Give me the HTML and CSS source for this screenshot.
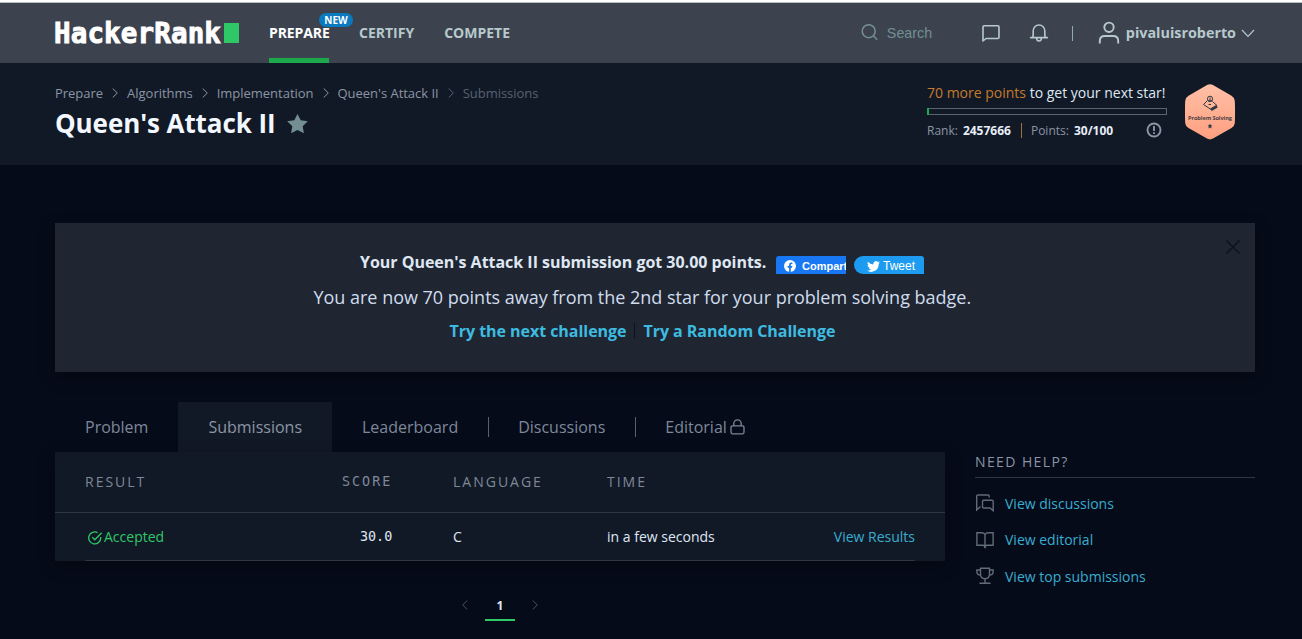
FILE: index.html
```html
<!DOCTYPE html>
<html lang="en">
<head>
<meta charset="utf-8">
<title>Queen's Attack II | HackerRank</title>
<link rel="stylesheet" href="styles.css">
</head>
<body>
<header class="topbar">
  <div class="logo"><span class="logo-text">HackerRank</span><span class="logo-block"></span></div>
  <nav class="nav">
    <a class="nav-item active">PREPARE<span class="new-badge">NEW</span></a>
    <a class="nav-item">CERTIFY</a>
    <a class="nav-item">COMPETE</a>
  </nav>
  <div class="tools">
    <div class="search">
      <svg width="18" height="18" viewBox="0 0 18 18" fill="none" stroke="currentColor" stroke-width="1.5"><circle cx="7.7" cy="7.2" r="6.5"/><path d="M12.300 11.800L16.200 15.700"/></svg>
      <span>Search</span>
    </div>
    <svg class="chat" width="20" height="20" viewBox="0 0 20 20" fill="none" stroke="currentColor" stroke-width="1.6" stroke-linejoin="round"><path d="M2 18V4Q2 2.800 3.200 2.800H16.800Q18 2.800 18 4V14.300Q18 15.500 16.800 15.500H5Z"/></svg>
    <svg class="bell" width="20" height="20" viewBox="0 0 20 20" fill="none" stroke="currentColor" stroke-width="1.600" stroke-linecap="round" stroke-linejoin="round"><path d="M1.600 14.600H18.400M3.600 14.600Q4.200 13 4.200 11V7.800A5.800 5.800 0 0 1 15.800 7.800V11Q15.800 13 16.400 14.600M7.600 15.200Q7.800 18 10 18T12.400 15.200"/></svg>
    <span class="divider"></span>
    <div class="user">
      <svg width="22" height="24" viewBox="0 0 22 24" fill="none" stroke="currentColor" stroke-width="1.9"><circle cx="11" cy="6.300" r="4.700"/><path d="M1.800 22.600V20Q1.800 15 6.800 15H15.200Q20.200 15 20.200 20V22.600"/></svg>
      <span class="username">pivaluisroberto</span>
      <svg class="caret" width="14" height="9" viewBox="0 0 14 9" fill="none" stroke="currentColor" stroke-width="1.1"><path d="M1 1L7 7.400L13 1"/></svg>
    </div>
  </div>
</header>

<section class="pagehead">
  <div class="headings">
    <div class="crumbs">
      <a>Prepare</a><svg class="chev" viewBox="0 0 6 10"><path d="M.7.5L5.3 5L.7 9.5"/></svg>
      <a>Algorithms</a><svg class="chev" viewBox="0 0 6 10"><path d="M.7.5L5.3 5L.7 9.5"/></svg>
      <a>Implementation</a><svg class="chev" viewBox="0 0 6 10"><path d="M.7.5L5.3 5L.7 9.5"/></svg>
      <a>Queen's Attack II</a><svg class="chev dim" viewBox="0 0 6 10"><path d="M.7.5L5.3 5L.7 9.5"/></svg>
      <span class="dim">Submissions</span>
    </div>
    <div class="title-row">
      <h1>Queen's Attack II</h1>
      <svg class="star" width="21" height="20" viewBox="0 0 21 20"><path fill="currentColor" d="M10.5 0L13.7 6.3L20.8 7.3L15.7 12.3L16.9 19.3L10.5 16L4.1 19.3L5.3 12.3L.2 7.3L7.3 6.3Z"/></svg>
    </div>
  </div>
  <div class="progress">
    <div class="goal"><em>70 more points</em> to get your next star!</div>
    <div class="bar"><div class="bar-fill"></div></div>
    <div class="stats">
      <span>Rank:</span><b>2457666</b><i class="sep"></i><span>Points:</span><b>30/100</b>
      <svg class="info" width="16" height="16" viewBox="0 0 16 16" fill="none" stroke="currentColor"><circle cx="8" cy="8" r="6.5" stroke-width="1.900"/><path stroke-width="1.900" d="M8 4V9M8 10.200V12"/></svg>
    </div>
  </div>
  <svg class="hex" width="50" height="56" viewBox="0 0 50 56">
    <defs><linearGradient id="peach" x1="0" y1="0" x2="0" y2="1"><stop offset="0" stop-color="#ffc0a6"/><stop offset="1" stop-color="#ff9f80"/></linearGradient></defs>
    <path fill="url(#peach)" d="M22.5.8Q25-.4 27.5.8L46.5 11.8Q49.5 13.5 49.8 17Q50.3 28 49.8 39Q49.5 42.3 46.5 44L28 54.6Q25 56.2 22 54.6L3.5 44Q.5 42.3.2 39Q-.3 28 .2 17Q.5 13.5 3.5 11.8Z"/>
    <g fill="none" stroke="#2f3945"><path d="M22.500 16.500L18.500 20.500L26 25.500L32 21.500L28 18"/><path stroke-width="2.800" d="M26 25.800L32 22.300"/><circle cx="25" cy="14.800" r="2.600"/><path d="M25 13.500V18M23 17H28M23.500 20.500H26"/></g>
    <text class="hex-label" x="25" y="36.200" text-anchor="middle" textLength="44">Problem Solving</text>
    <path fill="#2f3945" d="M25 39.600L25.800 41.200L27.500 41.400L26.200 42.600L26.600 44.400L25 43.500L23.400 44.400L23.800 42.600L22.500 41.400L24.200 41.200Z"/>
  </svg>
</section>

<main class="content">
  <section class="notice">
    <svg class="close" width="14" height="14" viewBox="0 0 14 14" fill="none" stroke="currentColor" stroke-width="1.500"><path d="M.5.5L13.5 13.5M13.5.5L.5 13.5"/></svg>
    <div class="notice-title">
      <strong>Your Queen's Attack II submission got 30.00 points.</strong>
      <span class="fb"><svg width="12" height="12" viewBox="0 0 12 12"><circle cx="6" cy="6" r="6" fill="#fff"/><path fill="#1877f2" d="M5.1 12V7.7H3.600V6H5.1V4.700Q5.1 2.500 7.200 2.500L8.400 2.600V4.100H7.600Q6.800 4.100 6.800 4.900V6H8.300L8 7.700H6.800V12Z"/></svg><span>Compartir</span></span>
      <span class="tw"><svg width="13" height="11" viewBox="0 0 24 20"><path fill="#fff" d="M24 2.400Q22.700 3 21.200 3.100Q22.800 2.200 23.300.5Q21.900 1.400 20.200 1.700A4.920 4.920 0 0 0 11.800 6.200Q5.700 5.900 1.700 1.100Q-.4 5.100 3.200 7.600Q2 7.600.9 7Q1 10.900 4.900 11.900Q3.800 12.200 2.700 12Q3.800 15.200 7.300 15.400Q4 17.900 0 17.500A13.900 13.900 0 0 0 21.500 5.100Q23 4 24 2.400Z"/></svg><span>Tweet</span></span>
    </div>
    <p class="notice-text">You are now 70 points away from the 2nd star for your problem solving badge.</p>
    <div class="notice-links"><a>Try the next challenge</a><i></i><a>Try a Random Challenge</a></div>
  </section>

  <nav class="tabs">
    <a class="tab">Problem</a><a class="tab selected">Submissions</a><a class="tab">Leaderboard</a><a class="tab ruled">Discussions</a><a class="tab ruled">Editorial<svg class="lock" width="15" height="16" viewBox="0 0 15 16" fill="none" stroke="currentColor" stroke-width="1.300"><rect x="1" y="6.800" width="13" height="8" rx="1.500"/><path d="M3.800 6.800V4.600A3.700 3.700 0 0 1 11.200 4.600V6.800"/></svg></a>
  </nav>

  <div class="columns">
    <div class="left">
      <div class="table">
        <div class="row head"><span>RESULT</span><span class="mono">SCORE</span><span>LANGUAGE</span><span>TIME</span><span></span></div>
        <div class="row entry">
          <span class="accepted"><svg width="15" height="14" viewBox="0 0 15 14" fill="none" stroke="currentColor" stroke-width="1.300"><path d="M12.700 6V7A6 6 0 1 1 9.500 1.600M4.300 6.300L6.800 8.800L13.700 1.800"/></svg>Accepted</span>
          <span class="mono">30.0</span><span>C</span><span>in a few seconds</span><a>View Results</a>
        </div>
      </div>
      <div class="pager">
        <svg class="chev" viewBox="0 0 6 10"><path d="M5.300.5L.7 5L5.300 9.500"/></svg>
        <span class="page">1</span>
        <svg class="chev" viewBox="0 0 6 10"><path d="M.7.5L5.300 5L.7 9.500"/></svg>
      </div>
    </div>
    <aside class="help">
      <h2>NEED HELP?</h2>
      <a><svg viewBox="0 0 20 20"><path d="M5.500 13.500L1.700 17V3.200Q1.700 2 2.900 2H13Q14.200 2 14.200 3.200V4.500M8.700 7.200H17Q18.200 7.200 18.200 8.400V17.700L15 15H8.700Q7.500 15 7.500 13.800V8.400Q7.500 7.200 8.700 7.200Z"/></svg>View discussions</a>
      <a><svg viewBox="0 0 20 20"><path d="M10 4.500Q9 2.700 6.500 2.700H1.900V15.300H8Q10 15.300 10 18.200V4.500Q11 2.700 13.500 2.700H18.100V15.300H12Q10 15.300 10 18.200"/></svg>View editorial</a>
      <a><svg viewBox="0 0 20 20"><path d="M5.500 2.300H14.500V8Q14.500 12.700 10 12.700T5.500 8ZM5.500 4H1.900V6Q1.900 9 5.500 9M14.500 4H18.100V6Q18.100 9 14.500 9M10 12.700V17M4.500 17.200H15.500"/></svg>View top submissions</a>
    </aside>
  </div>
</main>
</body>
</html>
```
FILE: styles.css
```css
* { box-sizing: border-box; }
body {
  margin: 0;
  width: 1302px;
  height: 639px;
  overflow: hidden;
  background: #050b19;
  color: #dfe7f3;
  font-family: "Open Sans", sans-serif;
  font-size: 14px;
  border-top: 2px solid #fff;
}
h1, h2, p { margin: 0; }
svg { flex: none; display: block; }

.topbar {
  display: flex;
  height: 61px;
  padding: 0 47px 0 54px;
  background: #3c434f;
  border-top: 1px solid #b9bcc0;
  color: #b7c9cc;
}
.logo { display: flex; align-items: center; width: 215px; }
.logo-text {
  width: 170px;
  font: bold 27.5px/60px "DejaVu Sans Mono", monospace;
  letter-spacing: .15px;
  -webkit-text-stroke: .9px #fff;
  color: #fff;
}
.logo-block { width: 15px; height: 20px; background: #2ec866; }
.nav { display: flex; gap: 30px; }
.nav-item {
  position: relative;
  height: 60px;
  font-size: 14px;
  line-height: 59px;
  font-weight: 700;
}
.nav-item.active { width: 60px; letter-spacing: -.1px; color: #fff; border-bottom: 5px solid #1ba94c; }
.new-badge {
  position: absolute;
  top: 10px;
  left: 50px;
  width: 34px;
  height: 14px;
  border-radius: 7px;
  background: #0b79bf;
  font-size: 10px;
  line-height: 14px;
  letter-spacing: 0;
  text-align: center;
}
.tools { display: flex; align-items: center; margin-left: auto; }
.search {
  display: flex;
  gap: 8px;
  width: 120px;
  color: #738f93;
  font: 14.3px/18px "Liberation Sans", sans-serif;
}
.chat { margin-right: 28px; }
.bell { margin-right: 23px; }
.divider { width: 1px; height: 15px; margin-right: 25px; background: #91abad; }
.user { display: flex; align-items: center; }
.username { margin: -2px 5px 0 6px; font-weight: 700; font-size: 14.35px; }

.pagehead {
  display: flex;
  height: 102px;
  padding-left: 55px;
  background: #121926;
}
.headings { width: 872px; padding-top: 20px; }
.crumbs {
  display: flex;
  align-items: center;
  height: 20px;
  font-size: 13px;
  letter-spacing: -.02px;
  color: #8b95a5;
}
.chev {
  width: 6px;
  height: 10px;
  margin: 0 9px;
  fill: none;
  stroke: #8b95a5;
}
.crumbs .dim { color: #576171; stroke: #576171; }
.title-row { display: flex; align-items: center; gap: 11px; height: 40px; }
h1 { font-size: 26px; line-height: 40px; letter-spacing: -.08px; color: #f3f7ff; }
.star { color: #738f93; margin-top: 2px; }
.progress { width: 240px; padding-top: 20px; }
.goal { font-size: 14px; line-height: 19px; white-space: nowrap; }
.goal em { font-style: normal; color: #c47b2b; }
.bar { height: 7px; margin-top: 6px; border: 1px solid #5b6371; }
.bar-fill { width: 2px; height: 7px; margin: -1px; background: #1ba94c; }
.stats {
  display: flex;
  align-items: center;
  height: 18px;
  margin-top: 6px;
  font-size: 12px;
  color: #8b95a5;
}
.stats b { margin-left: 5px; color: #e7eef9; }
.sep { width: 1px; height: 15px; margin: 0 9px 0 10px; background: #a76e35; }
.info { margin-left: auto; margin-right: 5px; }
.hex { margin: 21px 0 0 18px; }
.hex-label { font: bold 5.6px "Open Sans", sans-serif; fill: #4b4145; }

.content { width: 1200px; margin: 58px 0 0 55px; }
.notice {
  position: relative;
  height: 149px;
  padding-top: 24px;
  background: #1f2631;
  box-shadow: 0 5px 15px rgba(0, 0, 0, .35);
}
.close { position: absolute; top: 17px; right: 15px; color: #0c1320; }
.notice-title {
  display: flex;
  align-items: center;
  height: 30px;
  padding-left: 305px;
}
.notice-title strong { width: 416px; font-size: 16px; letter-spacing: -.02px; }
.fb, .tw {
  display: flex;
  align-items: center;
  width: 70px;
  height: 18px;
  margin: 6px 8px 0 0;
  overflow: hidden;
  color: #fff;
  font-family: "Liberation Sans", sans-serif;
}
.fb { gap: 6px; padding: 2px 0 0 8px; background: #1877f2; border-radius: 3px 0 0 0; font-size: 11px; font-weight: bold; }
.tw { gap: 3px; padding: 2px 0 0 13px; background: #1d9bf0; border-radius: 9px 3px 0 9px; font-size: 12px; }
.notice-text { padding-left: 258.5px; font-size: 18px; line-height: 40px; letter-spacing: -.015px; color: #d0dced; }
.notice-links {
  display: flex;
  align-items: center;
  padding-left: 394.5px;
  font-size: 16px;
  font-weight: 700;
  line-height: 28px;
  letter-spacing: -.04px;
  color: #3ebbe0;
}
.notice-links i { width: 1px; height: 16px; margin: 0 8px; background: #0c1320; }

.tabs { display: flex; height: 50px; margin-top: 30px; color: #7e8899; }
.tab { display: flex; align-items: center; padding: 0 30px; font-size: 16px; }
.tab.selected { background: #121926; color: #8b95a5; }
.tab.ruled::before {
  content: "";
  width: 1px;
  height: 20px;
  margin: 0 29px 0 -30px;
  background: #576171;
}
.lock { margin-left: 3px; }
.columns { display: flex; gap: 30px; }
.left { width: 890px; }
.table { height: 109px; background: #121926; box-shadow: 0 5px 15px rgba(0, 0, 0, .35); }
.row { display: grid; grid-template-columns: 256px 112px 154px 160px 148px; align-items: center; }
.head {
  height: 61px;
  padding: 0 30px 2px;
  border-bottom: 1px solid #2e3643;
  font-size: 14px;
  letter-spacing: 2px;
  color: #7e8899;
}
.mono { font-family: "DejaVu Sans Mono", monospace; font-size: 13.4px; }
.head .mono { padding-left: 1px; }
.entry { height: 48px; margin: 0 30px; border-bottom: 1px solid #2e3643; }
.entry .mono { padding-left: 19px; }
.entry a { text-align: right; color: #39add0; }
.accepted { display: flex; align-items: center; gap: 1px; padding-left: 3px; color: #2ec866; }
.accepted svg { margin-top: 2px; }
.pager {
  display: flex;
  justify-content: center;
  align-items: center;
  gap: 8px;
  height: 30px;
  margin-top: 30px;
}
.pager .chev { margin: -2px 9px 0; stroke: #475161; }
.page {
  width: 30px;
  height: 30px;
  border-bottom: 2px solid #2ec866;
  font-size: 12px;
  line-height: 30px;
  font-weight: 700;
  text-align: center;
}
.help { width: 280px; color: #39add0; }
.help h2 {
  height: 26px;
  margin-bottom: 7px;
  border-bottom: 1px solid #2e3643;
  font-size: 14px;
  font-weight: 400;
  line-height: 20px;
  letter-spacing: 1.4px;
  color: #8b95a5;
}
.help a { display: flex; align-items: center; gap: 10px; height: 36.5px; }
.help svg { width: 20px; height: 20px; fill: none; stroke: #626b78; stroke-width: 1.4; }
```
